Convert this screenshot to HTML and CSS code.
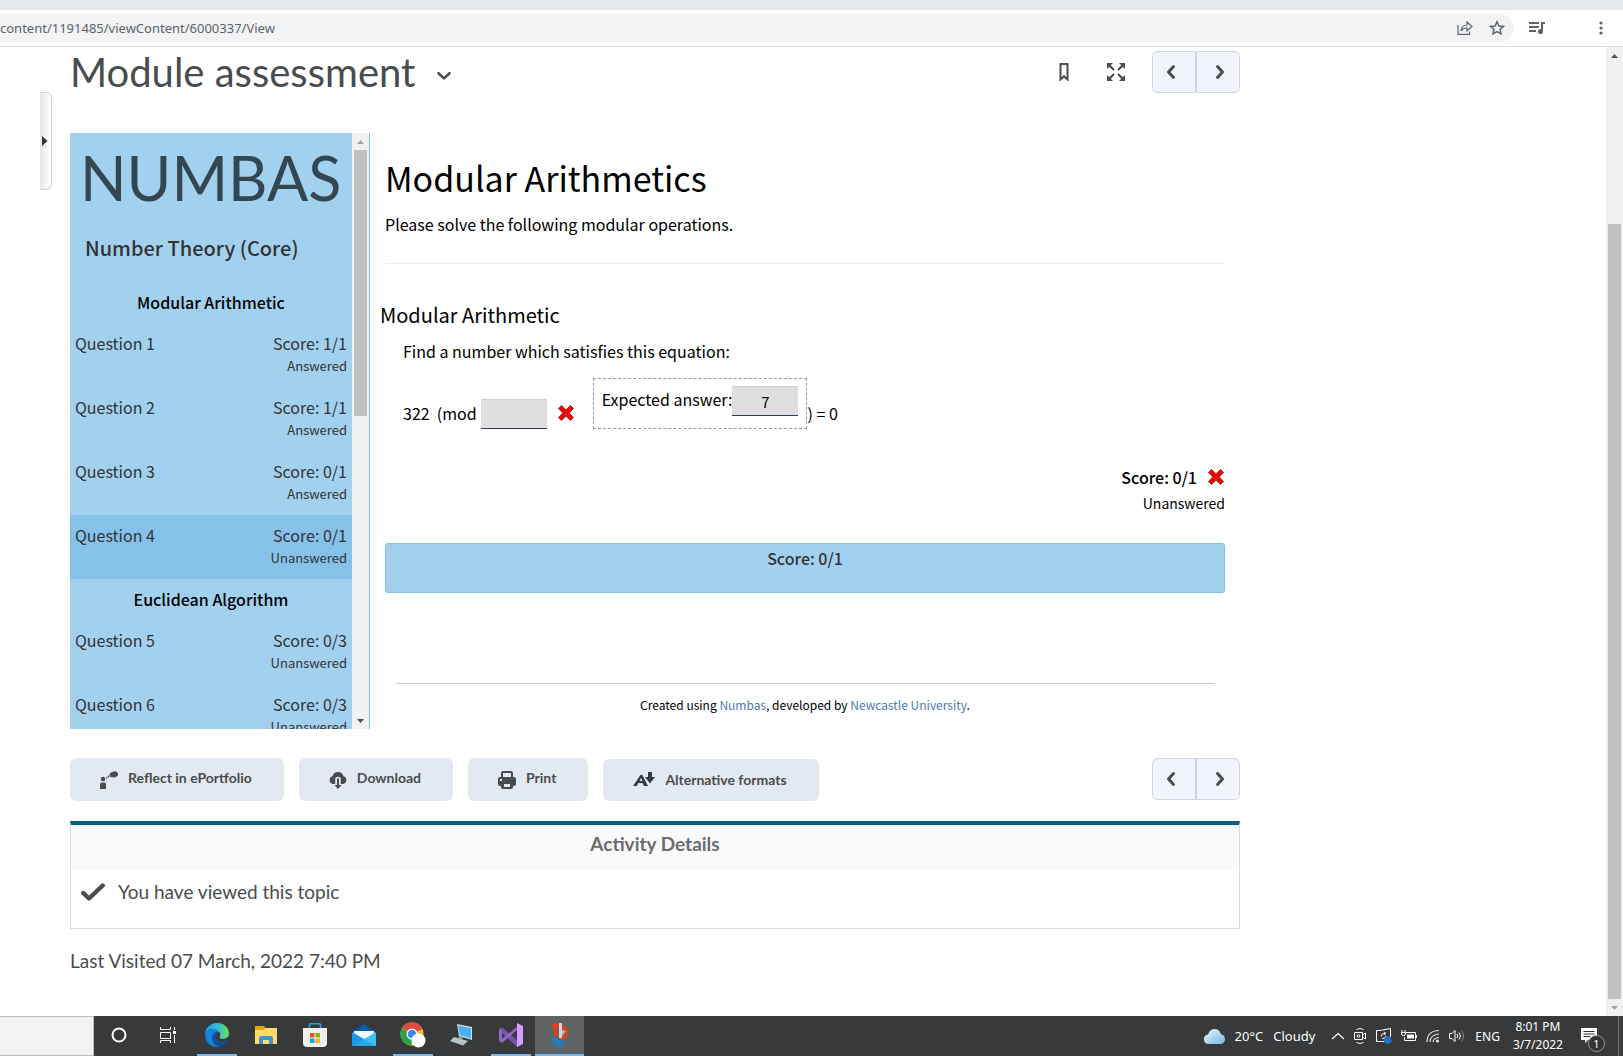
FILE: index.html
```html
<!DOCTYPE html>
<html lang="en">
<head>
    <meta charset="UTF-8">
    <meta name="viewport" content="width=device-width, initial-scale=1.0">
    <title>Module assessment</title>
    <link rel="stylesheet" href="styles.css">
</head>
<body>
    <div class="tab-strip"></div>
    <div class="toolbar">
        <div class="address-bar">
            <input type="text" class="url" aria-label="Address" value="content/1191485/viewContent/6000337/View">
            <button class="tool-btn" aria-label="Share">
                <svg width="16" height="16" viewBox="0 0 16 16" fill="none" stroke="#5f6368" stroke-width="1.2"><path d="M1 5v9.400h11.500v-3"/><path d="M4 11c.4-4 2.500-6 6-6V2l5 4.500-5 4.500V8c-2.500 0-4.500.8-6 3z"/></svg>
            </button>
            <button class="tool-btn" aria-label="Bookmark this page">
                <svg width="16" height="16" viewBox="0 0 16 16" fill="none" stroke="#5f6368" stroke-width="1.500"><path d="M8 1.800l1.900 4.200 4.500.4-3.400 3 1 4.400L8 11.500l-4 2.300 1-4.400-3.400-3 4.500-.4z"/></svg>
            </button>
        </div>
        <button class="tool-btn media-btn" aria-label="Media">
            <svg width="18" height="14" viewBox="0 0 18 14" fill="#5f6368"><path d="M1 1h10v2H1zM1 5h10v2H1zM1 9h7v2H1z"/><path d="M13 1h4v2h-2v7.500a2.500 2.500 0 1 1-2-2.400z"/></svg>
        </button>
        <button class="tool-btn" aria-label="Menu">
            <svg width="4" height="14" viewBox="0 0 4 14" fill="#5f6368"><circle cx="2" cy="2" r="1.600"/><circle cx="2" cy="7" r="1.600"/><circle cx="2" cy="12" r="1.600"/></svg>
        </button>
    </div>

    <div class="viewport">
        <div class="page">
            <button class="side-handle" aria-label="Expand side panel">
                <svg width="6" height="10" viewBox="0 0 6 10" fill="#333"><path d="M0 0l5.500 5L0 10z"/></svg>
            </button>
            <main class="content">
                <header class="topic-header">
                    <h1>Module assessment</h1>
                    <button class="icon-btn title-menu" aria-label="Topic actions">
                        <svg width="16" height="10" viewBox="0 0 16 10" fill="none" stroke="#494c4e" stroke-width="2.600" stroke-linecap="round" stroke-linejoin="round"><path d="M2.500 2.200L8 7.400l5.500-5.200"/></svg>
                    </button>
                    <button class="icon-btn bookmark" aria-label="Bookmark">
                        <svg width="10" height="18" viewBox="0 0 10 18" fill="none" stroke="#494c4e" stroke-width="2"><path d="M1.500 1h7v15.500L5 13.200l-3.500 3.300z"/></svg>
                    </button>
                    <button class="icon-btn fullscreen" aria-label="Fullscreen">
                        <svg width="18" height="18" viewBox="0 0 18 18" fill="#494c4e" stroke="#494c4e"><g stroke="none"><path d="M0 0h6L0 6zM12 0h6v6zM0 12v6h6zM18 12v6h-6z"/></g><path d="M2 2l5 5M16 2l-5 5M2 16l5-5M16 16l-5-5" stroke-width="2.200" fill="none"/></svg>
                    </button>
                    <div class="pager">
                        <button aria-label="Previous"><svg width="10" height="16" viewBox="0 0 10 16"><path d="M7.500 2.500L2.500 8l5 5.500"/></svg></button>
                        <button aria-label="Next"><svg width="10" height="16" viewBox="0 0 10 16"><path d="M2.500 2.500l5 5.500-5 5.500"/></svg></button>
                    </div>
                </header>

                <div class="numbas">
                    <aside class="exam-nav">
                        <div class="exam-scroll">
                            <div class="logo">NUMBAS</div>
                            <h2 class="exam-title">Number Theory (Core)</h2>
                            <h3>Modular Arithmetic</h3>
                            <ul>
                                <li><a href="#q1"><span>Question 1</span><span class="score">Score: 1/1<small>Answered</small></span></a></li>
                                <li><a href="#q2"><span>Question 2</span><span class="score">Score: 1/1<small>Answered</small></span></a></li>
                                <li><a href="#q3"><span>Question 3</span><span class="score">Score: 0/1<small>Answered</small></span></a></li>
                                <li class="active"><a href="#q4"><span>Question 4</span><span class="score">Score: 0/1<small>Unanswered</small></span></a></li>
                            </ul>
                            <h3>Euclidean Algorithm</h3>
                            <ul>
                                <li><a href="#q5"><span>Question 5</span><span class="score">Score: 0/3<small>Unanswered</small></span></a></li>
                                <li><a href="#q6"><span>Question 6</span><span class="score">Score: 0/3<small>Unanswered</small></span></a></li>
                            </ul>
                        </div>
                        <div class="scrollbar">
                            <svg width="17" height="17" viewBox="0 0 17 17" fill="#a3a3a3"><path d="M5 11l3.500-4 3.500 4z"/></svg>
                            <div class="thumb exam-thumb"></div>
                            <svg width="17" height="17" viewBox="0 0 17 17" fill="#505050"><path d="M5 7l3.500 4L12 7z"/></svg>
                        </div>
                    </aside>

                    <section class="question">
                        <h2>Modular Arithmetics</h2>
                        <p class="statement">Please solve the following modular operations.</p>
                        <h3>Modular Arithmetic</h3>
                        <div class="part">
                            <p>Find a number which satisfies this equation:</p>
                            <div class="equation">
                                <span class="lhs">322&nbsp; (mod</span>
                                <input type="text" class="answer" aria-label="Your answer" readonly>
                                <svg class="cross" width="18" height="18" viewBox="0 0 18 18"><use href="#cross"/></svg>
                                <span class="expected">
                                    <label for="expected">Expected answer:</label><input type="text" id="expected" class="answer" value="7" readonly>
                                </span>
                                <span>) = 0</span>
                            </div>
                        </div>
                        <div class="part-score">
                            <strong>Score: 0/1</strong>
                            <svg width="18" height="18" viewBox="0 0 18 18"><path id="cross" d="M4.500 1.500L9 5.800l4.500-4.300 3 3L12.200 9l4.300 4.500-3 3L9 12.200l-4.500 4.300-3-3L5.800 9 1.500 4.500z" fill="#f00" stroke="#743a3a" stroke-linejoin="round"/></svg>
                            <small>Unanswered</small>
                        </div>
                        <div class="total-score">Score: 0/1</div>
                        <footer>Created using <a href="#numbas">Numbas</a>, developed by <a href="#ncl">Newcastle University</a>.</footer>
                    </section>
                </div>

                <div class="actions">
                    <button class="action">
                        <svg width="18" height="18" viewBox="0 0 18 18" fill="#494c4e"><circle cx="3" cy="8" r="2.200"/><path d="M0 18v-4.500Q0 11.500 2 11.500h2q2 0 2 2V18z"/><circle cx="6.500" cy="7" r=".8"/><circle cx="8.500" cy="5.500" r="1"/><path d="M9.500 3.500Q10 1 12.500 1q3-1.500 5 .5 1.500 3-1 4-1.500 1.500-3.500.8-3.500.2-3.500-2.800z"/></svg>
                        Reflect in ePortfolio
                    </button>
                    <button class="action">
                        <svg width="18" height="18" viewBox="0 0 18 18" fill="#494c4e"><path d="M4 13a4 4 0 0 1-.5-7.800C4.200 2.500 6.200 1 9 1s4.800 1.500 5.500 4.200A4 4 0 0 1 14 13h-2.200V7.500Q11.500 5.800 9 5.800T6.200 7.500V13z"/><path d="M8 7.500h2V14h2.500L9 18l-3.500-4H8z"/></svg>
                        Download
                    </button>
                    <button class="action">
                        <svg width="18" height="18" viewBox="0 0 18 18" fill="#494c4e"><path fill-rule="evenodd" d="M3 6V2q0-2 2-2h8q2 0 2 2v4h1q2 0 2 2v5q0 2-2 2h-1v1q0 2-2 2H5q-2 0-2-2v-1H2q-2 0-2-2V8q0-2 2-2zM5 2v4h8V2zM6 13v3h6v-3zM2 8v2h2V8z"/></svg>
                        Print
                    </button>
                    <button class="action formats">
                        <svg width="22" height="14" viewBox="0 0 22 14" fill="#2f3e48"><path fill-rule="evenodd" d="M0 14L7.500 3h2L15 14h-4l-1.500-3H5.200L4 14zM6.500 9h3L8 6z"/><path d="M15 0h4v5h3l-5 6.500L12 5h3z"/></svg>
                        Alternative formats
                    </button>
                    <div class="pager">
                        <button aria-label="Previous"><svg width="10" height="16" viewBox="0 0 10 16"><path d="M7.500 2.500L2.500 8l5 5.500"/></svg></button>
                        <button aria-label="Next"><svg width="10" height="16" viewBox="0 0 10 16"><path d="M2.500 2.500l5 5.500-5 5.500"/></svg></button>
                    </div>
                </div>

                <section class="activity">
                    <h2>Activity Details</h2>
                    <p>
                        <svg width="24" height="18" viewBox="0 0 24 18" fill="none" stroke="#494c4e" stroke-width="4.400" stroke-linecap="round" stroke-linejoin="round"><path d="M2.300 10L8 15.500 21.700 2.500"/></svg>
                        You have viewed this topic
                    </p>
                </section>
                <p class="last-visited">Last Visited 07 March, 2022 7:40 PM</p>
            </main>
        </div>
        <div class="scrollbar">
            <svg width="17" height="17" viewBox="0 0 17 17" fill="#505050"><path d="M5 11l3.500-4 3.500 4z"/></svg>
            <div class="thumb page-thumb"></div>
            <svg width="17" height="17" viewBox="0 0 17 17" fill="#a3a3a3"><path d="M5 7l3.500 4L12 7z"/></svg>
        </div>
    </div>

    <div class="taskbar">
        <input type="text" class="task-search" aria-label="Search">
        <button class="task" aria-label="Cortana">
            <svg width="16" height="16" viewBox="0 0 16 16" fill="none" stroke="#fff" stroke-width="2"><circle cx="8" cy="8" r="6.500"/></svg>
        </button>
        <button class="task" aria-label="Task view">
            <svg width="16" height="16" viewBox="0 0 16 16" fill="none" stroke="#fff"><path d="M.5 0v2.500h10V0M.5 5.500h10v6H.5zM.5 16v-2.500h10V16M14.500 0v3M14.500 8v8"/><path d="M13 4h3v3h-3z" fill="#fff" stroke="none"/></svg>
        </button>
        <button class="task open" aria-label="Edge">
            <svg width="24" height="24" viewBox="0 0 24 24">
                <defs>
                    <linearGradient id="edgeTop" x1="0" x2="1"><stop offset="0" stop-color="#1b9de2"/><stop offset=".55" stop-color="#35c1d0"/><stop offset="1" stop-color="#6ce04f"/></linearGradient>
                </defs>
                <circle cx="12" cy="12" r="12" fill="#0c59a4"/>
                <path d="M0 11C1 4 6 0 12 0c7 0 12 5 12 10 0 4-3 6-6 6-4 0-4-1.500-3.500-2.500C16 10 13 6 8 6c-4 0-7 2-8 5z" fill="url(#edgeTop)"/>
                <path d="M0 11c1-3 4-5 8-5 3 0 5 1 6 3-4-1-7 2-7 6 0 4 3 8 7 8.800C7 25 0 20 0 11z" fill="#1583d8"/>
                <path d="M10 11c-2 4 1 8.500 6 8.500 3 0 5-.8 6.500-1.500-1.500 3-5 5.700-8.500 5.800C8 22 6 15 10 11z" fill="#0f4c9c"/>
                <path d="M14 9c2 2 1 4 .5 4.500-.5 1 .5 2.500 3.500 2.500 2 0 4-.7 5-2l.8 2.500L20 18.500c-5 1.500-9-1-9.500-4C10.200 12 12 10 14 9z" fill="#38393b"/>
            </svg>
        </button>
        <button class="task" aria-label="File Explorer">
            <svg width="22" height="18" viewBox="0 0 22 18"><path d="M0 0h9l1.500 2H22v16H0z" fill="#e5a50f"/><path d="M0 4h9l1-2h12v16H0z" fill="#ffd969"/><path d="M4 18v-6q0-2 2-2h10q2 0 2 2v6h-4v-4H8v4z" fill="#3a97dd"/></svg>
        </button>
        <button class="task" aria-label="Microsoft Store">
            <svg width="24" height="24" viewBox="0 0 24 24"><path d="M6.500 6V2q0-1.200 1.200-1.200h8.600q1.200 0 1.200 1.200v4" fill="none" stroke="#1ea7e8" stroke-width="1.600"/><path d="M0 5h24v15q0 4-4 4H4q-4 0-4-4z" fill="#efefef"/><path d="M7 10h4.500v4.500H7z" fill="#f25022"/><path d="M12.500 10H17v4.500h-4.500z" fill="#7fba00"/><path d="M7 15.500h4.500V20H7z" fill="#00a4ef"/><path d="M12.500 15.500H17V20h-4.500z" fill="#ffb900"/></svg>
        </button>
        <button class="task" aria-label="Mail">
            <svg width="24" height="22" viewBox="0 0 24 22"><path d="M0 8L12 0l12 8v3H0z" fill="#0a5aa6"/><path d="M2 7h20v8H2z" fill="#f3f8fc"/><path d="M0 8l24 14H0z" fill="#1b98e6"/><path d="M24 8L9 17l7 5h8z" fill="#3bc0f5"/><path d="M0 22l12-7 12 7z" fill="#27a9ec"/></svg>
        </button>
        <button class="task open" aria-label="Chrome">
            <svg width="26" height="26" viewBox="0 0 26 26"><circle cx="12" cy="12" r="11.500" fill="#fbc02d"/><path d="M12 12L2 6A11.500 11.500 0 0 1 22.500 7z" fill="#e3493e"/><path d="M2 6a11.500 11.500 0 0 0 8.500 17.400L15 15z" fill="#2ba24c"/><circle cx="12" cy="12" r="5.500" fill="#fff"/><circle cx="12" cy="12" r="4.300" fill="#4285f4"/><circle cx="18.500" cy="18.500" r="7" fill="#fff"/></svg>
        </button>
        <button class="task" aria-label="Remote Desktop">
            <svg width="24" height="22" viewBox="0 0 24 22"><path d="M7 0l15 3v13L9 12z" fill="#d5dee4"/><path d="M8 1.500L21 4v10.500L10 11z" fill="#46b4f3"/><path d="M9 12l4 1-1 3-4-1z" fill="#8c979e"/><path d="M4 13l14 4-5 4.500L0 17z" fill="#b9c4ca"/></svg>
        </button>
        <button class="task open" aria-label="Visual Studio">
            <svg width="24" height="24" viewBox="0 0 24 24"><path d="M0 6l3-2 15 13v7L3 10v6l-3 2z" fill="#7252aa"/><path d="M0 18V6l3 2v8l15-12V0l0 7L3 20z" fill="#9468c8"/><path d="M18 0l6 3v18l-6 3z" fill="#d59dff"/></svg>
        </button>
        <button class="task open current" aria-label="Snipping Tool">
            <svg width="18" height="24" viewBox="0 0 18 24"><path d="M1 1C10-1 17 3 17 9c0 5-3 8-8 8v-4c3 0 4-2 4-4 0-3-3-5-7-4l1 8-4 1V5H1z" fill="#d8431c"/><path d="M8 0h3v15H8z" fill="#d3d7da"/><path d="M11 13l4-5-4-1z" fill="#b8bec3"/><g fill="none" stroke="#1482d6" stroke-width="2.200"><circle cx="3.500" cy="18" r="2.300"/><circle cx="9.500" cy="20.500" r="2.300"/></g></svg>
        </button>

        <div class="tray">
            <span class="weather">
                <svg width="22" height="15" viewBox="0 0 22 15"><defs><linearGradient id="cloud" x1="0" y1="0" x2="1" y2="1"><stop offset="0" stop-color="#f0f8fe"/><stop offset="1" stop-color="#6fb4e8"/></linearGradient></defs><path d="M5 15a4.800 4.800 0 0 1 0-9.500C6 2 8.500 0 11.500 0c3.500 0 5.800 2 6.300 5 2.700.5 4.200 2.500 4.200 5 0 3-2 5-5 5z" fill="url(#cloud)"/></svg>
                <span>20°C</span><span>Cloudy</span>
            </span>
            <svg width="14" height="8" viewBox="0 0 14 8" fill="none" stroke="#fff" stroke-width="1.200"><path d="M1 7l6-5.500L13 7"/></svg>
            <svg width="12" height="16" viewBox="0 0 12 16" fill="none" stroke="#fff"><path d="M2.500 1.500Q6-.5 9.500 1.500M2.500 14.500q3.500 2 7 0M.5 4.500h8v7h-8zM8.500 7l3-2v6l-3-2"/><circle cx="4.500" cy="8" r="1.300"/></svg>
            <svg width="17" height="16" viewBox="0 0 17 16" fill="none" stroke="#fff"><path d="M5 2.500H1.500v11H9M5 2.500L15.500.5V9M6 8.500q0-3 4-3M9 4l2 1.500L9 7M11 8q0 2.500-4 2.500"/><circle cx="12.800" cy="12" r="3.800" fill="#2372c9" stroke="none"/></svg>
            <svg width="16" height="12" viewBox="0 0 16 12" fill="none" stroke="#fff"><path d="M5 2.500h9.500v8H3.500V7M15.500 5v3M1 0v2.500M4 0v2.500M.5 2.500h4V4q0 1.500-2 1.500T.5 4z"/><path d="M6 4.500h7v4H6z" fill="#fff" stroke="none"/></svg>
            <svg width="14" height="14" viewBox="0 0 14 14" fill="none" stroke="#ddd" stroke-width="1.200"><path d="M1 13Q1 2 13 1.500M4 13Q4.500 5.500 13 5M7 13Q7.500 9 13 8.500"/><circle cx="11.500" cy="12" r="1" fill="#fff"/></svg>
            <svg width="17" height="14" viewBox="0 0 17 14" fill="none" stroke="#fff"><path d="M.5 4.500h2.500l3-3v11l-3-3H.500zM8 5q1.500 2 0 4M10 3.500q3 3.500 0 7"/><path d="M12.500 1.500q4 5.500 0 11" stroke="#888"/></svg>
            <span class="lang">ENG</span>
            <span class="clock">8:01 PM<br>3/7/2022</span>
            <button class="notify" aria-label="Notifications">
                <svg width="16" height="16" viewBox="0 0 16 16"><path d="M0 0h16v12H7l-3 3v-3H0z" fill="#fff"/><path d="M2.500 3.500h11M2.500 6h11M2.500 8.500h7" stroke="#333"/></svg>
                <span class="badge">1</span>
            </button>
        </div>
    </div>
</body>
</html>
```
FILE: styles.css
```css
* {
    box-sizing: border-box;
}
body {
    margin: 0;
    height: 100vh;
    display: flex;
    flex-direction: column;
    overflow: hidden;
    background: #fff;
    color: #494c4e;
    font-family: Lato, sans-serif;
    font-size: 19px;
}
h1, h2, h3, p, ul {
    margin: 0;
    padding: 0;
    font-weight: 400;
}
ul {
    list-style: none;
}
button, input {
    font: inherit;
    color: inherit;
    border: none;
    padding: 0;
    background: none;
}
button {
    cursor: pointer;
}
a {
    text-decoration: none;
}
svg {
    display: block;
    flex: none;
}

/* browser chrome */
.tab-strip {
    flex: none;
    height: 10px;
    background: #e5e9ec;
}
.toolbar {
    flex: none;
    display: flex;
    align-items: center;
    height: 37px;
    padding-right: 20px;
    border-bottom: 1px solid #d9dbdd;
}
.address-bar {
    flex: 1;
    display: flex;
    align-items: center;
    gap: 16px;
    height: 28px;
    padding-right: 9px;
    margin-right: 14px;
    background: #f1f3f4;
    border-radius: 0 14px 14px 0;
}
.url {
    flex: 1;
    color: #5f6368;
    font-family: "Noto Sans", sans-serif;
    font-size: 13px;
}
.media-btn {
    margin-right: 53px;
}

/* scrollbars */
.scrollbar {
    flex: none;
    display: flex;
    flex-direction: column;
    width: 17px;
    background: #f1f1f1;
}
.scrollbar svg:last-child {
    margin-top: auto;
}
.thumb {
    margin: 0 2px;
    background: #c1c1c1;
}
.exam-thumb {
    height: 266px;
}
.page-thumb {
    height: 80%;
    margin-top: auto;
}
.page-thumb + svg:last-child {
    margin-top: 0;
}

.viewport {
    flex: 1;
    display: flex;
    min-height: 0;
}
.page {
    flex: 1;
    display: flex;
    align-items: flex-start;
    gap: 18px;
    padding: 0 40px;
}
.side-handle {
    width: 12px;
    height: 98px;
    margin-top: 45px;
    padding-left: 2px;
    border: 1px solid #cdd5dc;
    border-left: none;
    border-radius: 0 6px 6px 0;
    background: linear-gradient(to right, #e6e6e6, #fff);
}
.content {
    flex: 1;
    max-width: 1170px;
}

.topic-header {
    display: flex;
    align-items: center;
    height: 50px;
    margin-bottom: 36px;
}
h1 {
    font-size: 40px;
    line-height: 48px;
}
.title-menu {
    margin: 8px auto 0 21px;
}
.bookmark {
    margin-right: 38px;
}
.fullscreen {
    margin-right: 27px;
}
.pager {
    display: flex;
}
.pager button {
    display: flex;
    align-items: center;
    justify-content: center;
    width: 44px;
    height: 42px;
    background: #f1f4fb;
    border: 1px solid #cdd5dc;
    border-radius: 6px 0 0 6px;
}
.pager button:last-child {
    padding-left: 4px;
    border-radius: 0 6px 6px 0;
}
.pager button:first-child {
    padding-right: 6px;
}
.pager svg {
    fill: none;
    stroke: #494c4e;
    stroke-width: 3;
    stroke-linecap: round;
    stroke-linejoin: round;
}

/* numbas exam */
.numbas {
    display: flex;
    height: 596px;
    margin-bottom: 29px;
    font-family: "Noto Sans CJK SC", sans-serif;
    font-size: 16px;
    line-height: 24px;
    color: #000;
}
.exam-nav {
    flex: none;
    display: flex;
    width: 300px;
    background: #a2d1ef;
    border-right: 1px solid #85c1e9;
}
.exam-scroll {
    flex: 1;
    overflow: hidden;
}
.logo {
    padding: 7px 0 0 10px;
    color: #34464f;
    font-family: Lato, sans-serif;
    font-size: 61px;
    line-height: 76px;
}
.exam-title {
    margin: 16px 15px 18px;
    color: #333;
    font-size: 20px;
    line-height: 32px;
    font-weight: 500;
}
.exam-nav h3 {
    padding: 8px 0 9px;
    font-size: 16px;
    font-weight: 500;
    text-align: center;
}
.exam-nav a {
    display: flex;
    justify-content: space-between;
    height: 64px;
    padding: 8px 5px;
    color: #333;
}
.active {
    background: #85c1e9;
}
.score {
    text-align: right;
}
small {
    display: block;
    font-size: 13px;
    line-height: 22px;
}

.question {
    flex: 1;
    padding: 25px 15px 0;
}
.question h2 {
    font-size: 34px;
    line-height: 40px;
}
.statement {
    margin-top: 14px;
    padding-bottom: 27px;
    border-bottom: 1px solid #eee;
}
.question h3 {
    margin: 35px 0 8px -5px;
    font-size: 20px;
    line-height: 32px;
}
.part {
    padding-left: 18px;
}
.equation {
    display: flex;
    align-items: flex-end;
    margin-top: 15px;
    line-height: 32px;
}
.lhs {
    margin-right: 4px;
}
.answer {
    width: 66px;
    height: 30px;
    background: #dfdfdf;
    border-top: 1px solid #d0d0d0;
    border-bottom: 1px solid #2c3e50;
    text-align: center;
    font-size: 15px;
}
.cross {
    margin: 0 18px 7px 10px;
}
.expected {
    display: flex;
    padding: 7px 8px 12px;
    border: 1px dashed #999;
    line-height: 26px;
}
.part-score {
    display: grid;
    grid-template-columns: 1fr auto;
    justify-items: end;
    align-items: center;
    column-gap: 10px;
    margin-top: 36px;
}
strong {
    font-weight: 500;
}
.part-score small {
    grid-column: 1 / 3;
    font-size: 14px;
    line-height: 28px;
}
.total-score {
    height: 50px;
    margin: 26px 0 90px;
    padding-top: 2px;
    background: #a2d1ef;
    border: 1px solid #85c1e9;
    border-radius: 3px;
    color: #333;
    font-weight: 500;
    text-align: center;
}
footer {
    margin: 0 11px;
    padding-top: 9px;
    border-top: 1px solid #ccc;
    font-size: 12px;
    text-align: center;
}
footer a {
    color: #4b7cb3;
}

/* buttons below the topic */
.actions {
    display: flex;
    align-items: flex-start;
    gap: 15px;
    margin-bottom: 20px;
}
.action {
    display: flex;
    align-items: center;
    gap: 10px;
    height: 43px;
    padding: 0 32px 4px 30px;
    background: #e3e9f1;
    border-radius: 6px;
    font-size: 14px;
    font-weight: 700;
}
.action svg {
    margin-top: 4px;
}
.action.formats {
    height: 42px;
    margin-top: 1px;
    padding-bottom: 2px;
}
.formats svg {
    margin-top: 0;
}
.actions .pager {
    margin-left: auto;
}

.activity {
    border: 1px solid #d8dadb;
    border-top: 4px solid #006080;
    height: 108px;
}
.activity h2 {
    height: 45px;
    background: #fafafa;
    color: #6a6d70;
    font-size: 19px;
    line-height: 38px;
    font-weight: 700;
    text-align: center;
}
.activity p {
    display: flex;
    align-items: center;
    gap: 13px;
    padding: 10px;
    line-height: 24px;
}
.last-visited {
    margin-top: 20px;
    line-height: 24px;
}

/* windows taskbar */
.taskbar {
    flex: none;
    display: flex;
    height: 40px;
    background: #38393b;
    color: #fff;
    font-family: "Noto Sans", sans-serif;
    font-size: 13px;
}
.task-search {
    width: 94px;
    background: #f2f2f2;
    border: 1px solid #bbb;
    border-left: none;
}
.task {
    display: flex;
    align-items: center;
    justify-content: center;
    width: 49px;
    border-bottom: 2px solid transparent;
}
.open {
    background: linear-gradient(#76b9ed, #76b9ed) center bottom / 40px 2px no-repeat border-box;
}
.current {
    background: linear-gradient(#76b9ed, #76b9ed) center bottom / 100% 2px no-repeat border-box, #616263;
}
.tray {
    display: flex;
    align-items: center;
    margin: 0 4px 0 auto;
    gap: 9px;
    padding-right: 13px;
    border-right: 1px solid #777;
}
.weather {
    display: flex;
    align-items: center;
    gap: 10px;
    margin-right: 7px;
}
.lang, .clock {
    font-size: 12px;
}
.clock {
    margin: 0 9px 0 4px;
    line-height: 18px;
    text-align: center;
}
.notify {
    position: relative;
    padding-right: 8px;
}
.badge {
    position: absolute;
    left: 7px;
    top: 7px;
    width: 17px;
    height: 17px;
    border: 1px solid #999;
    border-radius: 50%;
    background: #333;
    font-size: 11px;
    line-height: 15px;
    text-align: center;
}
```
